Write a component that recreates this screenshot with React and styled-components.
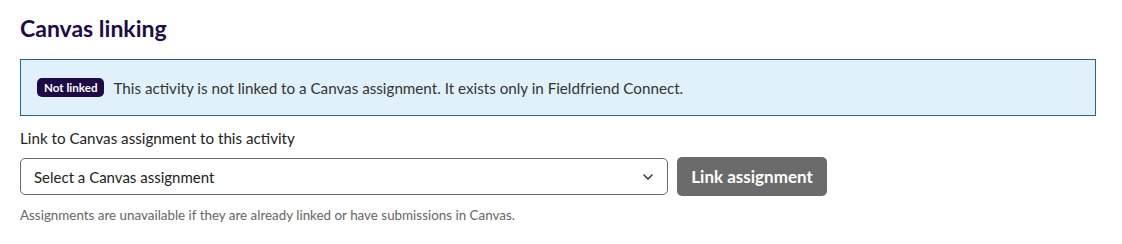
import React from "react";
import styled, { createGlobalStyle } from "styled-components";

const GlobalStyle = createGlobalStyle`
  body {
    margin: 0;
    background: #ffffff;
    font-family: "Lato", "Noto Sans", sans-serif;
  }
`;

const Section = styled.section`
  padding: 14px 26px 0 20px;
  width: 1076px;
`;

const Title = styled.h2`
  margin: 0;
  font-size: 23px;
  font-weight: 700;
  line-height: 28px;
  color: #1c0c48;
`;

const Alert = styled.div`
  margin-top: 17px;
  height: 55px;
  display: flex;
  align-items: center;
  gap: 9px;
  padding: 0 16px;
  background: #e0f1fb;
  border: 1px solid #2b628e;
`;

const Badge = styled.span`
  display: inline-flex;
  align-items: center;
  height: 19px;
  padding: 0 7px;
  border-radius: 5px;
  background: #1e0a45;
  color: #ffffff;
  font-size: 11.6px;
  font-weight: 700;
`;

const AlertText = styled.span`
  font-size: 15.2px;
  color: #333333;
`;

const Label = styled.label`
  display: block;
  margin-top: 12px;
  font-size: 15.2px;
  line-height: 20px;
  color: #222222;
`;

const Row = styled.div`
  margin-top: 9px;
  display: flex;
  align-items: center;
  gap: 9px;
`;

const Select = styled.div`
  width: 648px;
  height: 37px;
  box-sizing: border-box;
  display: flex;
  align-items: center;
  justify-content: space-between;
  padding: 0 14px 0 13px;
  border: 1px solid #6a6a6a;
  border-radius: 5px;
  font-size: 15px;
  color: #222222;
`;

const Button = styled.button`
  height: 39px;
  width: 150px;
  border: none;
  border-radius: 5px;
  background: #6b6b6b;
  color: #ffffff;
  font-family: inherit;
  font-size: 17px;
  font-weight: 700;
`;

const Hint = styled.p`
  margin: 11px 0 0;
  font-size: 13.4px;
  color: #666666;
`;

const Chevron = () => (
  <svg width="10" height="6" viewBox="0 0 10 6" fill="none">
    <path d="M1 1l4 4 4-4" stroke="#333" strokeWidth="1.5" strokeLinecap="round" strokeLinejoin="round" />
  </svg>
);

export default function App() {
  return (
    <>
      <GlobalStyle />
      <Section>
        <Title>Canvas linking</Title>
        <Alert>
          <Badge>Not linked</Badge>
          <AlertText>
            This activity is not linked to a Canvas assignment. It exists only in Fieldfriend Connect.
          </AlertText>
        </Alert>
        <Label>Link to Canvas assignment to this activity</Label>
        <Row>
          <Select>
            <span>Select a Canvas assignment</span>
            <Chevron />
          </Select>
          <Button>Link assignment</Button>
        </Row>
        <Hint>Assignments are unavailable if they are already linked or have submissions in Canvas.</Hint>
      </Section>
    </>
  );
}
